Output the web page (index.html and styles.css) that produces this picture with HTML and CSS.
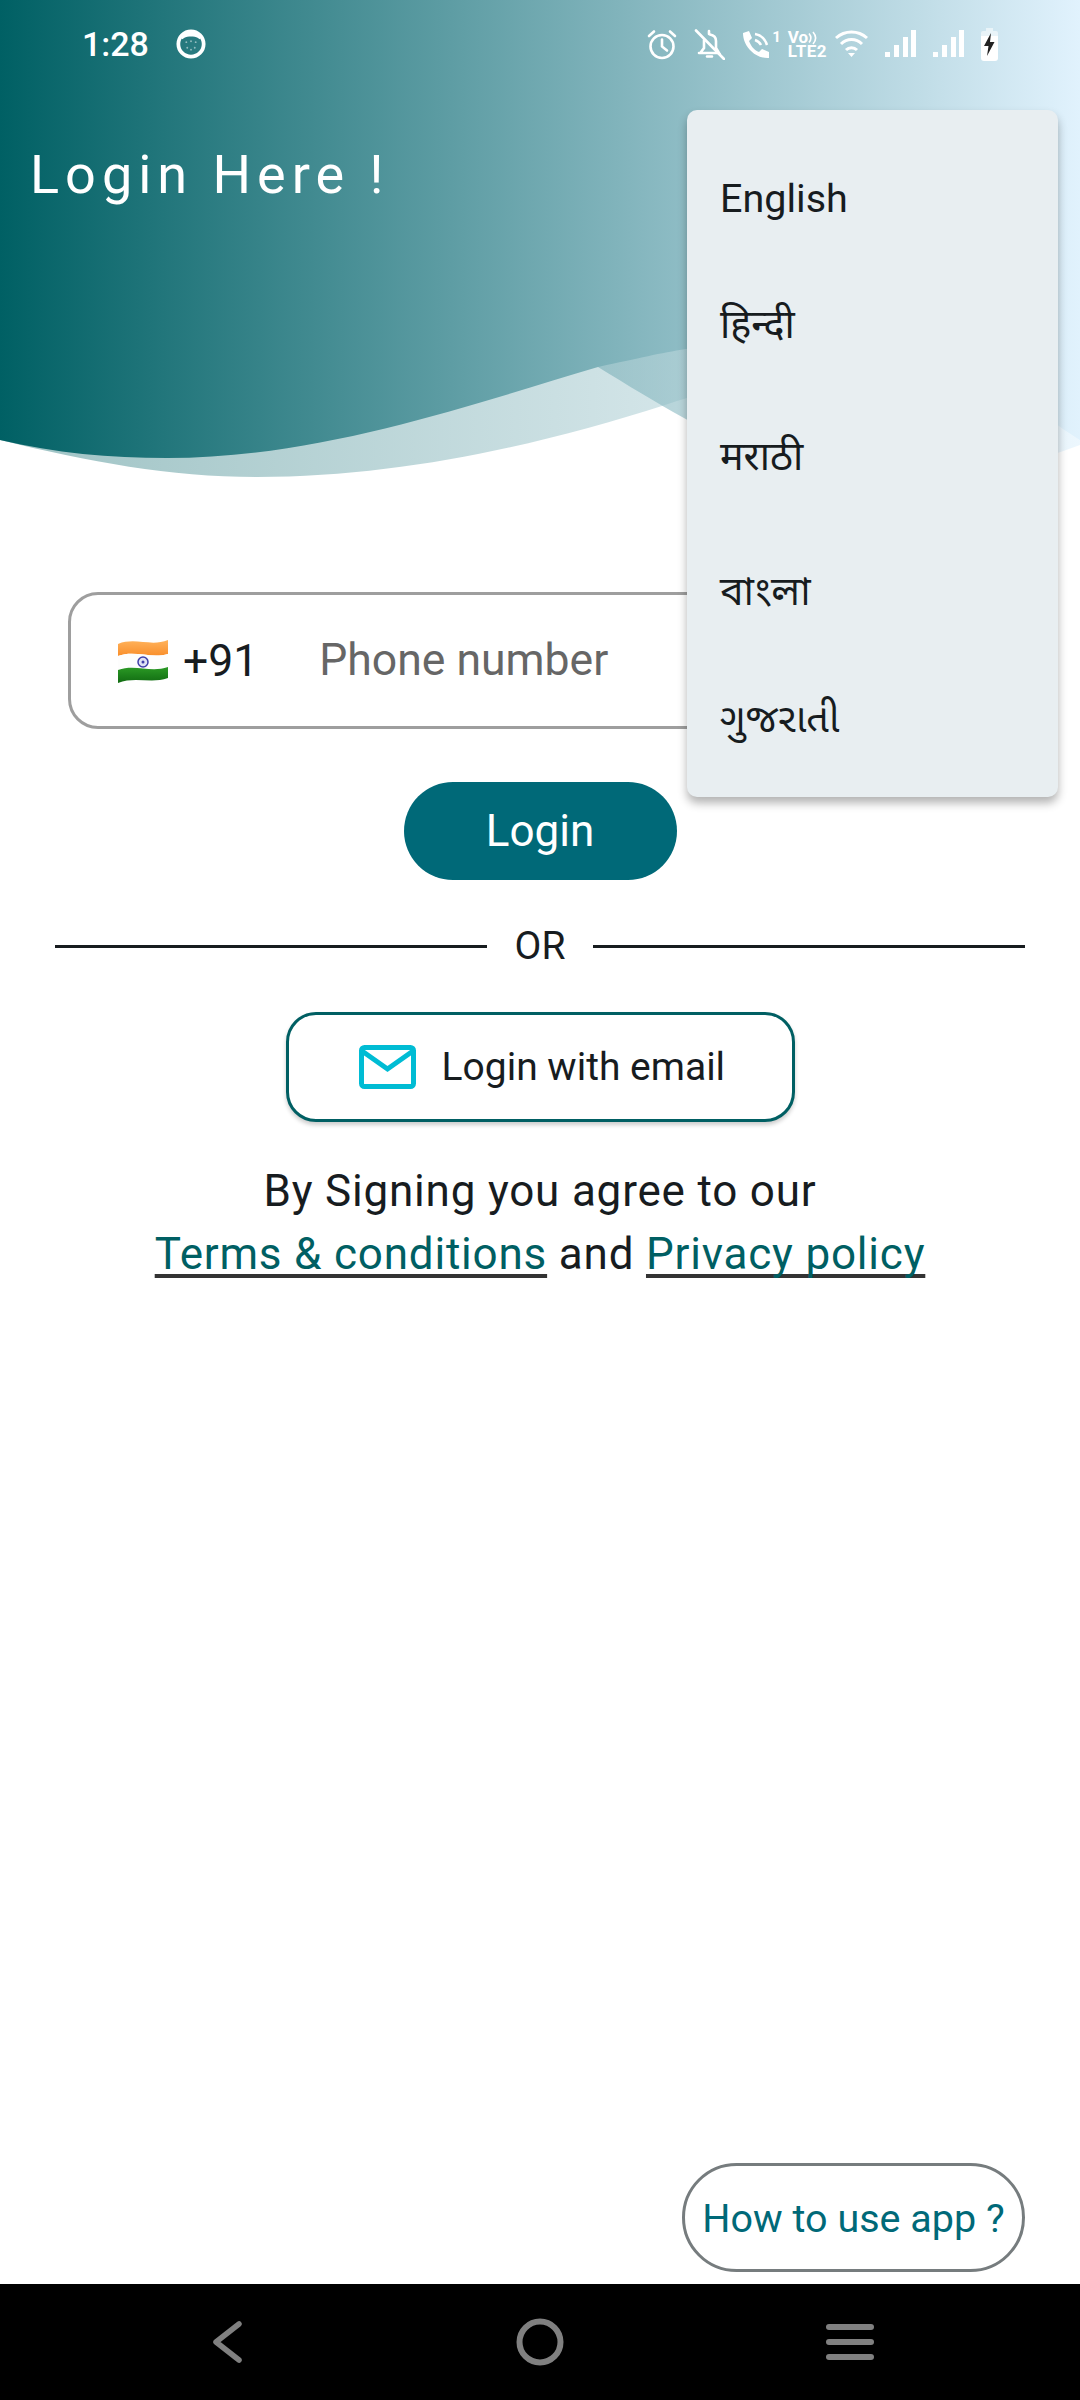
FILE: index.html
```html
<!DOCTYPE html>
<html lang="en">
<head>
<meta charset="utf-8">
<title>Login</title>
<link rel="stylesheet" href="styles.css">
</head>
<body>
<div class="screen">
  <header class="hero">
    <svg class="hero-art" width="1080" height="490" viewBox="0 0 1080 490">
      <defs>
        <linearGradient id="heroGrad" x1="0" y1="0" x2="1080" y2="0" gradientUnits="userSpaceOnUse">
          <stop offset="0" stop-color="#006064"/>
          <stop offset="1" stop-color="#e1f2fd"/>
        </linearGradient>
      </defs>
      <path fill="url(#heroGrad)" opacity=".38" d="M0 440C90 462 170 477 257 477C400 477 540 445 665 405C760 372 900 355 1000 390C1030 402 1055 425 1080 440L1080 0L0 0Z"/>
      <path fill="url(#heroGrad)" opacity=".62" d="M598 367C700 430 790 482 880 482C950 482 1015 470 1080 445L1080 0L500 0L500 367Z"/>
      <path fill="url(#heroGrad)" d="M0 440C55 453 110 458 167 458C320 458 470 405 598 367C640 358 660 353 686 349C800 335 930 350 1000 390C1030 402 1055 425 1080 440L1080 0L0 0Z"/>
    </svg>
    <div class="status">
      <div class="status-left">
        <span class="time">1:28</span>
        <svg class="ico-face" width="30" height="30" viewBox="0 0 32 32">
          <circle cx="16" cy="16" r="13.500" fill="none" stroke="#fff" stroke-width="4"/>
          <path d="M5 9C9 2 23 2 27 9L25 11L23.500 9.500C19 7.500 13 7.500 8.500 9.500L7 11Z" fill="#fff"/>
          <g fill="#fff" fill-opacity=".5"><circle cx="11" cy="14" r="1"/><circle cx="16" cy="13" r="1"/><circle cx="21" cy="14" r="1"/><circle cx="12" cy="20" r="1"/><circle cx="16" cy="22" r="1"/><circle cx="20" cy="20" r="1"/></g>
        </svg>
      </div>
      <div class="status-right">
        <svg class="ico" width="30" height="31" viewBox="0 0 30 31" fill="none" stroke="#fff" stroke-width="2.600" stroke-linecap="round"><circle cx="15" cy="17.500" r="11.500"/><path d="M15 10.500V17.500L20 21.500M2 7L7 2.500M28 7L23 2.500"/></svg>
        <svg class="ico" width="31" height="31" viewBox="0 0 31 31" fill="none" stroke="#fff" stroke-width="2.600" stroke-linecap="round"><path d="M5 24H25L22 19V12C22 8 19 6 16 5.500M10 11V19L7 23"/><path d="M13 27.500H18M15 5V2M2 1.500L30 30"/></svg>
        <div class="call">
          <svg width="28" height="29" viewBox="0 0 28 29"><path fill="#fff" d="M1 3L7 1L10 8L7 11C9 16 12 20 17 22L20 19L27 22V28C14 29 1 17 1 3Z"/><path fill="none" stroke="#fff" stroke-width="2.500" d="M13 4C19 5 23 9 25 15M13 10C16 11 18 13 19 15"/></svg>
          <span class="sim">1</span>
        </div>
        <div class="volte">
          <div class="vo-line"><span>Vo</span><svg width="10" height="14" viewBox="0 0 10 14" fill="none" stroke="#fff" stroke-width="1.600"><path d="M1 2.500C3.500 5.500 3.500 8.500 1 11.500M5 1C8.500 5 8.500 9 5 13"/></svg></div>
          <span class="lte">LTE2</span>
        </div>
        <svg class="ico" width="33" height="28" viewBox="0 0 33 28" fill="none" stroke="#fff" stroke-width="3"><path d="M1 8C10 0 23 0 32 8M6 14C12 8 21 8 27 14M11 20C14 17 19 17 22 20"/><path d="M13 23H20L16.500 27Z" fill="#fff" stroke="none"/></svg>
        <svg class="ico" width="31" height="28" viewBox="0 0 31 28" fill="#fff"><rect x="0" y="22" width="5" height="5"/><rect x="9" y="15" width="5" height="12"/><rect x="18" y="7" width="5" height="20"/><rect x="26" y="0" width="5" height="27"/></svg>
        <svg class="ico" width="31" height="28" viewBox="0 0 31 28" fill="#fff"><rect x="0" y="22" width="5" height="5"/><rect x="9" y="15" width="5" height="12"/><rect x="18" y="7" width="5" height="20"/><rect x="26" y="0" width="5" height="27"/></svg>
        <svg class="ico" width="17" height="33" viewBox="0 0 17 33"><path fill="#fff" fill-opacity=".55" d="M5 3V0H12V3H15Q17 3 17 5V10H0V5Q0 3 2 3Z"/><path fill="#fff" d="M0 8H17V30Q17 33 14 33H3Q0 33 0 30Z"/><path fill="#222" d="M10 5L3 18H7.500L6 28L13.500 14H9Z"/></svg>
      </div>
    </div>
    <h1 class="title">Login Here !</h1>
  </header>

  <main class="content">
    <div class="phone">
      <svg class="flag" width="52" height="46" viewBox="0 0 52 46">
        <defs>
          <linearGradient id="flagShade" x1="0" y1="0" x2="0" y2="1">
            <stop offset="0" stop-color="#ffb35c"/>
            <stop offset="1" stop-color="#f98e2b"/>
          </linearGradient>
          <linearGradient id="flagGreen" x1="0" y1="0" x2="0" y2="1">
            <stop offset="0" stop-color="#2b9a25"/>
            <stop offset="1" stop-color="#116b12"/>
          </linearGradient>
        </defs>
        <path fill="url(#flagShade)" d="M1 6C18 -1 34 9 51 2V16C34 21 18 12 1 18Z"/>
        <path fill="#fdfdfd" d="M1 18C18 12 34 21 51 16V29C34 35 18 26 1 32Z"/>
        <path fill="url(#flagGreen)" d="M1 32C18 26 34 35 51 29V40C34 46 18 38 1 45Z"/>
        <circle cx="26" cy="24" r="5" fill="#dfe1f5" stroke="#3f3fa8" stroke-width="1.500"/>
        <circle cx="26" cy="24" r="1.500" fill="#3f3fa8"/>
      </svg>
      <span class="code">+91</span>
      <span class="placeholder">Phone number</span>
    </div>
    <button class="login" type="button">Login</button>
    <div class="or"><span class="rule"></span><span class="or-text">OR</span><span class="rule"></span></div>
    <button class="email" type="button">
      <svg width="57" height="44" viewBox="0 0 57 44" fill="none"><rect x="2.500" y="2.500" width="52" height="39" rx="3" stroke="#00bcd4" stroke-width="5"/><path d="M3 6L28.500 24L54 6" stroke="#00bcd4" stroke-width="5"/></svg>
      <span>Login with email</span>
    </button>
    <p class="terms">By Signing you agree to our<br><a class="link">Terms &amp; conditions</a> and <a class="link">Privacy policy</a></p>
    <button class="help" type="button">How to use app ?</button>
  </main>

  <nav class="nav">
    <svg class="nav-back" width="29" height="42" viewBox="0 0 29 42" fill="none" stroke="#808080" stroke-width="5.500" stroke-linecap="round" stroke-linejoin="round"><path d="M26 3L3 21L26 39"/></svg>
    <svg class="nav-home" width="48" height="48" viewBox="0 0 48 48" fill="none" stroke="#808080" stroke-width="6"><circle cx="24" cy="24" r="20.500"/></svg>
    <div class="menu-ico"><span></span><span></span><span></span></div>
  </nav>

  <ul class="langs">
    <li class="lang">English</li>
    <li class="lang">हिन्दी</li>
    <li class="lang">मराठी</li>
    <li class="lang">বাংলা</li>
    <li class="lang">ગુજરાતી</li>
  </ul>
</div>
</body>
</html>
```
FILE: styles.css
```css
* { box-sizing: border-box; }
html, body { margin: 0; padding: 0; background: #fff; }
body { font-family: Roboto, "Noto Sans", "Noto Sans Devanagari", "Noto Sans Bengali", "Noto Sans Gujarati", sans-serif; color: #171c1f; }
.screen { position: relative; width: 1080px; height: 2400px; display: flex; flex-direction: column; overflow: hidden; background: #fff; }

.hero { position: relative; height: 480px; flex: none; }
.hero-art { position: absolute; left: 0; top: 0; }
.status { position: relative; display: flex; justify-content: space-between; align-items: center; height: 34px; margin-top: 27px; padding: 0 82px 0 82px; }
.status-left { display: flex; align-items: center; gap: 27px; }
.time { color: #fff; font-size: 34px; font-weight: 500; }
.status-right { display: flex; align-items: center; gap: 17px; }
.ico, .ico-face { display: block; }
.call { display: flex; align-items: flex-start; gap: 2px; }
.sim { color: #fff; font-size: 15px; font-weight: 700; line-height: 15px; }
.volte { display: flex; flex-direction: column; color: #fff; font-size: 17px; font-weight: 700; line-height: 13px; margin-left: -10px; margin-right: -9px; }
.vo-line { display: flex; align-items: center; gap: 0; }
.lte { letter-spacing: .5px; }
.title { position: relative; margin: 84px 0 0 30px; color: #fff; font-size: 54px; font-weight: 400; letter-spacing: 6px; line-height: 60px; }

.content { flex: 1; display: flex; flex-direction: column; align-items: center; padding-top: 112px; }
.phone { width: 942px; height: 137px; flex: none; display: flex; align-items: center; padding-left: 46px; border: 3px solid #9e9e9e; border-radius: 30px; margin-right: 2px; }
.code { margin-left: 14px; font-size: 44.500px; }
.placeholder { margin-left: 61px; margin-top: -2px; font-size: 44.500px; color: #666; }
.login { width: 273px; height: 98px; flex: none; margin-top: 53px; border: 0; border-radius: 49px; background: #006978; color: #fff; font: 400 44px Roboto, sans-serif; }
.or { width: 970px; display: flex; align-items: center; margin-top: 43px; }
.rule { flex: 1; height: 3px; background: #171c1f; }
.or-text { padding: 0 28px; font-size: 39px; }
.email { width: 509px; height: 110px; flex: none; margin-top: 43px; display: flex; align-items: center; gap: 26px; padding-left: 70px; background: #fff; border: 3px solid #005f63; border-radius: 30px; box-shadow: 0 3px 4px rgba(0,0,0,.2); color: #171c1f; font: 400 39px Roboto, sans-serif; }
.terms { margin: 38px 0 0; text-align: center; font-size: 44px; line-height: 63px; letter-spacing: .8px; }
.link { color: #005f63; text-decoration: underline; text-decoration-color: #333; text-decoration-skip-ink: none; text-underline-offset: 5px; }
.help { margin-top: auto; margin-bottom: 12px; margin-right: 55px; align-self: flex-end; width: 343px; height: 109px; flex: none; border: 3px solid #767c7e; border-radius: 55px; background: #fff; color: #006978; font: 400 39.500px Roboto, sans-serif; padding: 1px 0 0; }

.nav { height: 116px; flex: none; background: #000; display: flex; align-items: center; padding: 0 206px 0 213px; }
.nav-back { margin-right: 274px; }
.nav-home { margin-right: 262px; }
.menu-ico { width: 48px; display: flex; flex-direction: column; gap: 9px; }
.menu-ico span { display: block; height: 6px; border-radius: 3px; background: #808080; }

.langs { position: absolute; left: 687px; top: 110px; width: 371px; height: 687px; margin: 0; padding: 23px 32px 0 33px; list-style: none; background: #e8eef1; border-radius: 10px; box-shadow: 0 6px 10px rgba(0,0,0,.3); }
.lang { height: 131px; display: flex; align-items: center; font-size: 39.500px; }
.lang:nth-child(2) { margin-top: -7px; }
.lang:nth-child(3) { margin-top: 1px; }
.lang:nth-child(4) { margin-top: 9px; }
.lang:nth-child(5) { margin-top: -4px; }
```
